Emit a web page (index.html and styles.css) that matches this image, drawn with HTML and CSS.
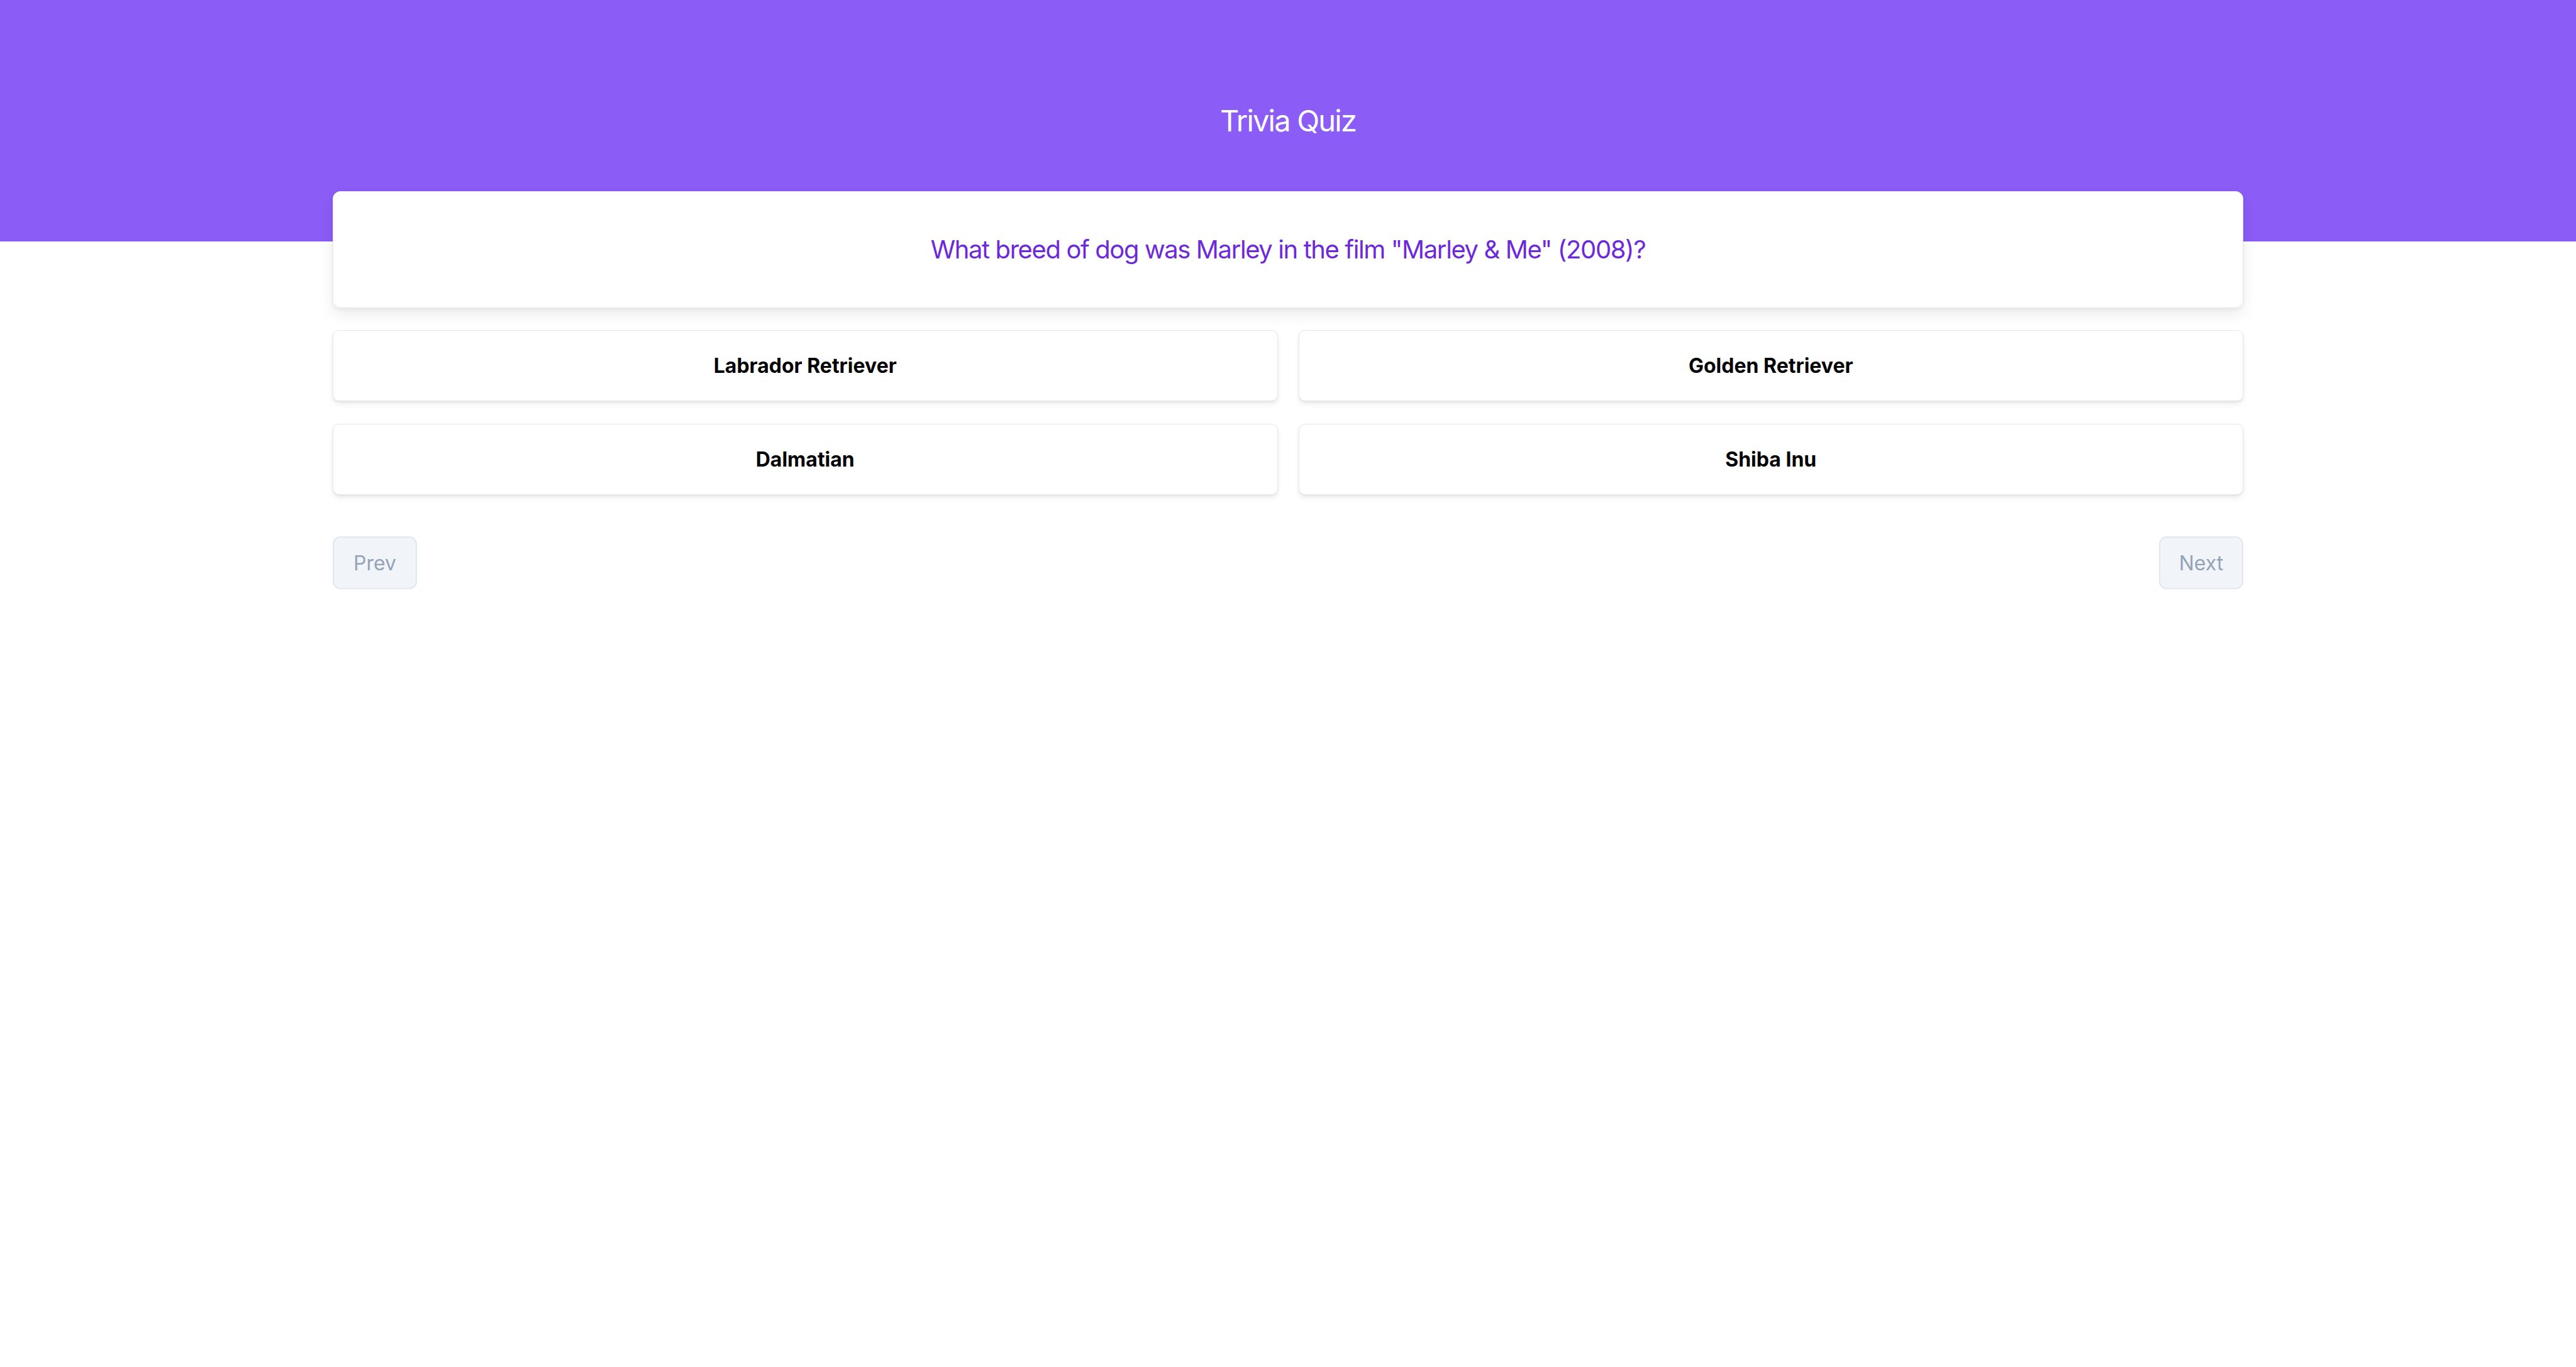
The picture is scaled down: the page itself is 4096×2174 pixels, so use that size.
FILE: index.html
```html
<!DOCTYPE html>
<html lang="en">
<head>
<meta charset="utf-8">
<title>Trivia Quiz</title>
<link rel="stylesheet" href="styles.css">
</head>
<body>
<header class="hero">
  <h1 class="hero-title">Trivia Quiz</h1>
</header>
<main class="quiz">
  <section class="question-card">
    <p class="question">What breed of dog was Marley in the film &quot;Marley &amp; Me&quot; (2008)?</p>
  </section>
  <section class="answers">
    <button class="answer">Labrador Retriever</button>
    <button class="answer">Golden Retriever</button>
    <button class="answer">Dalmatian</button>
    <button class="answer">Shiba Inu</button>
  </section>
  <nav class="pager">
    <button class="pager-btn">Prev</button>
    <button class="pager-btn">Next</button>
  </nav>
</main>
</body>
</html>
```

FILE: styles.css
```css
* { box-sizing: border-box; }
html, body { margin: 0; padding: 0; background: #ffffff; }
body { font-family: Inter, "Noto Sans", sans-serif; color: #000; }

.hero {
  background: #8b5cf6;
  height: 384px;
  padding-top: 160px;
  text-align: center;
}
.hero-title {
  margin: 0;
  color: #ffffff;
  font-size: 47px;
  font-weight: 400;
  line-height: 64px;
  letter-spacing: -1.8px;
}

.quiz {
  position: relative;
  width: 3038px;
  margin: -80px auto 0;
}

.question-card {
  height: 186px;
  background: #ffffff;
  border: 1.5px solid #e5e7eb;
  border-radius: 12px;
  box-shadow: 0 10px 24px rgba(0, 0, 0, 0.08), 0 3px 6px rgba(0, 0, 0, 0.04);
  display: flex;
  align-items: center;
  justify-content: center;
}
.question {
  margin: 0;
  color: #6d28d9;
  font-size: 40px;
  line-height: 56px;
  font-weight: 400;
  letter-spacing: -1.4px;
}

.answers {
  margin-top: 35px;
  display: grid;
  grid-template-columns: 1fr 1fr;
  gap: 36px 33px;
}
.answer {
  height: 113px;
  background: #ffffff;
  border: 1.5px solid #e5e7eb;
  border-radius: 10px;
  box-shadow: 0 5px 10px rgba(0, 0, 0, 0.07), 0 2px 3px rgba(0, 0, 0, 0.05);
  font-family: Inter, "Noto Sans", sans-serif;
  font-size: 32px;
  font-weight: 700;
  color: #000000;
  padding: 0;
}

.pager {
  margin-top: 66px;
  display: flex;
  justify-content: space-between;
}
.pager-btn {
  width: 134px;
  height: 84px;
  background: #f1f5f9;
  border: 2px solid #e2e8f0;
  border-radius: 12px;
  color: #94a3b8;
  font-family: Inter, "Noto Sans", sans-serif;
  font-size: 32px;
  font-weight: 400;
  padding: 0;
}
```
